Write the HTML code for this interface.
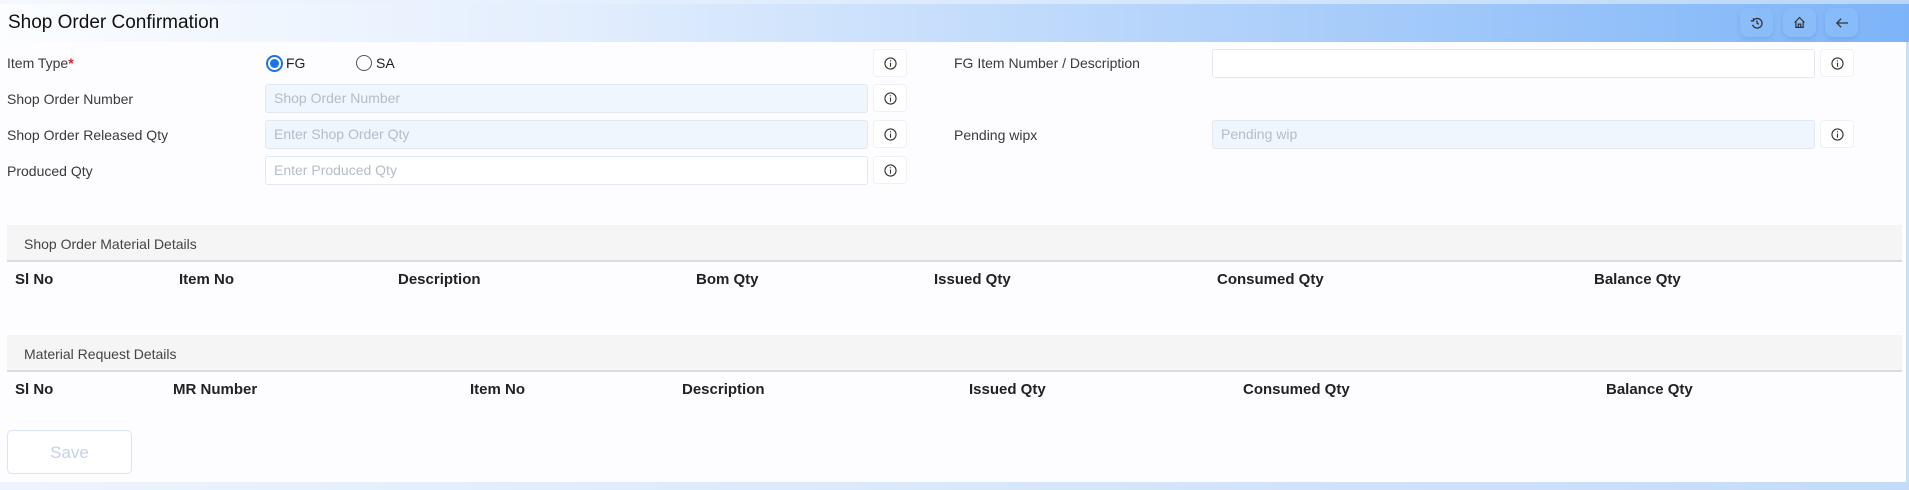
<!DOCTYPE html>
<html><head><meta charset="utf-8"><style>
*{box-sizing:border-box;margin:0;padding:0}
body{width:1909px;height:490px;overflow:hidden;background:#fdfdff;font-family:"Liberation Sans",sans-serif;position:relative;color:#333}
.a{position:absolute}
.top{left:0;top:0;width:1909px;height:4px;background:linear-gradient(90deg,#f4f8fe,#d6e7fc 60%,#b9d6fa)}
.hdr{left:0;top:4px;width:1909px;height:38px;background:linear-gradient(90deg,#fbfdff 0%,#e3eefd 30%,#b7d5fb 60%,#7db4f8 100%)}
.title{left:8px;top:12px;font-size:19px;color:#111}
.hb{top:8px;width:33px;height:29px;border-radius:8px;background:rgba(140,190,250,.6);box-shadow:0 2px 4px rgba(60,100,160,.18);display:flex;align-items:center;justify-content:center}
.rb{right:0;top:42px;width:3px;height:440px;background:#c9def9}
.bot{left:0;top:482px;width:1909px;height:8px;background:linear-gradient(90deg,#eef4fd,#c3dbf8)}
.lbl{font-size:14px;color:#3a3a3a}
.inp{height:29px;border:1px solid #e3e8f0;border-radius:3px;background:#f0f6fe;font-size:14px;color:#b5bcc8;padding:6px 8px;line-height:15px}
.inp.w{background:#fff}
.ib{width:34px;height:28px;border:1px solid #eef1f6;border-radius:4px;background:#fff;display:flex;align-items:center;justify-content:center}
.band{left:7px;width:1895px;height:37px;background:#f5f5f5;border-bottom:2px solid #dcdcdc;font-size:14px;color:#444;padding:11px 17px}
.th{font-size:15px;font-weight:bold;color:#222}
</style></head><body>
<div class="a top"></div>
<div class="a hdr"></div>
<div class="a title">Shop Order Confirmation</div>
<div class="a hb" style="left:1740px"><svg width="14" height="14" viewBox="0 0 16 16" fill="none" stroke="#333" stroke-width="1.5"><path d="M3.5 5.5A5.5 5.5 0 1 1 3 10"/><path d="M1 5.5h3V2.5"/><path d="M8 5v3l2 1.5"/></svg></div>
<div class="a hb" style="left:1783px"><svg width="13" height="13" viewBox="0 0 16 16" fill="none" stroke="#333" stroke-width="1.5"><path d="M2 8L8 2l6 6M3.5 6.5V14h9V6.5M6.5 14v-4h3v4"/></svg></div>
<div class="a hb" style="left:1825px"><svg width="14" height="12" viewBox="0 0 16 14" fill="none" stroke="#333" stroke-width="1.5"><path d="M15 7H2M7 2L2 7l5 5"/></svg></div>
<div class="a rb"></div>
<div class="a bot"></div>

<div class="a lbl" style="left:7px;top:55px">Item Type<span style="color:#e0202a;font-weight:bold">*</span></div>
<div class="a" style="left:266px;top:55px;width:17px;height:17px;border:2px solid #1a73e8;border-radius:50%;"><div style="margin:2px;width:9px;height:9px;border-radius:50%;background:#1a73e8"></div></div>
<div class="a lbl" style="left:286px;top:55px;color:#222">FG</div>
<div class="a" style="left:356px;top:55px;width:16px;height:16px;border:1.3px solid #555;border-radius:50%"></div>
<div class="a lbl" style="left:376px;top:55px;color:#222">SA</div>

<div class="a lbl" style="left:7px;top:91px">Shop Order Number</div>
<div class="a lbl" style="left:7px;top:127px">Shop Order Released Qty</div>
<div class="a lbl" style="left:7px;top:163px">Produced Qty</div>
<div class="a inp" style="left:265px;top:84px;width:603px">Shop Order Number</div>
<div class="a inp" style="left:265px;top:120px;width:603px">Enter Shop Order Qty</div>
<div class="a inp w" style="left:265px;top:156px;width:603px">Enter Produced Qty</div>

<div class="a lbl" style="left:954px;top:55px">FG Item Number / Description</div>
<div class="a lbl" style="left:954px;top:127px">Pending wipx</div>
<div class="a inp w" style="left:1212px;top:49px;width:603px"></div>
<div class="a inp" style="left:1212px;top:120px;width:603px">Pending wip</div>

<div class="a ib" style="left:873px;top:49px"><svg width="13" height="13" viewBox="0 0 14 14" fill="none" stroke="#333" stroke-width="1.2"><circle cx="7" cy="7" r="6"/><path d="M7 6v4.5M7 3.5v1.2"/></svg></div>
<div class="a ib" style="left:873px;top:84px"><svg width="13" height="13" viewBox="0 0 14 14" fill="none" stroke="#333" stroke-width="1.2"><circle cx="7" cy="7" r="6"/><path d="M7 6v4.5M7 3.5v1.2"/></svg></div>
<div class="a ib" style="left:873px;top:120px"><svg width="13" height="13" viewBox="0 0 14 14" fill="none" stroke="#333" stroke-width="1.2"><circle cx="7" cy="7" r="6"/><path d="M7 6v4.5M7 3.5v1.2"/></svg></div>
<div class="a ib" style="left:873px;top:156px"><svg width="13" height="13" viewBox="0 0 14 14" fill="none" stroke="#333" stroke-width="1.2"><circle cx="7" cy="7" r="6"/><path d="M7 6v4.5M7 3.5v1.2"/></svg></div>
<div class="a ib" style="left:1820px;top:49px"><svg width="13" height="13" viewBox="0 0 14 14" fill="none" stroke="#333" stroke-width="1.2"><circle cx="7" cy="7" r="6"/><path d="M7 6v4.5M7 3.5v1.2"/></svg></div>
<div class="a ib" style="left:1820px;top:120px"><svg width="13" height="13" viewBox="0 0 14 14" fill="none" stroke="#333" stroke-width="1.2"><circle cx="7" cy="7" r="6"/><path d="M7 6v4.5M7 3.5v1.2"/></svg></div>

<div class="a band" style="top:225px">Shop Order Material Details</div>
<div class="a th" style="left:15px;top:271px">Sl No</div>
<div class="a th" style="left:179px;top:271px">Item No</div>
<div class="a th" style="left:398px;top:271px">Description</div>
<div class="a th" style="left:696px;top:271px">Bom Qty</div>
<div class="a th" style="left:934px;top:271px">Issued Qty</div>
<div class="a th" style="left:1217px;top:271px">Consumed Qty</div>
<div class="a th" style="left:1594px;top:271px">Balance Qty</div>

<div class="a band" style="top:335px">Material Request Details</div>
<div class="a th" style="left:15px;top:381px">Sl No</div>
<div class="a th" style="left:173px;top:381px">MR Number</div>
<div class="a th" style="left:470px;top:381px">Item No</div>
<div class="a th" style="left:682px;top:381px">Description</div>
<div class="a th" style="left:969px;top:381px">Issued Qty</div>
<div class="a th" style="left:1243px;top:381px">Consumed Qty</div>
<div class="a th" style="left:1606px;top:381px">Balance Qty</div>

<div class="a" style="left:7px;top:430px;width:125px;height:44px;border:1px solid #d6e4f7;border-radius:5px;background:#fff;color:#c5d3e8;font-size:17px;text-align:center;line-height:44px">Save</div>
</body></html>
